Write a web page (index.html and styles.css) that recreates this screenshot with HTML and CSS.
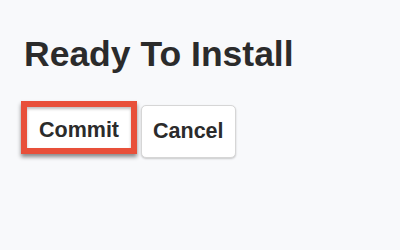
FILE: index.html
```html
<!DOCTYPE html>
<html lang="en">
<head>
  <meta charset="UTF-8" />
  <meta name="viewport" content="width=device-width, initial-scale=1.0"/>
  <title>Ready To Install</title>
  <link rel="stylesheet" href="styles.css">
</head>
<body>

  <div class="panel">
    <h1>Ready To Install</h1>
    <div class="actions">
      <button class="btn btn-commit">Commit</button>
      <button class="btn">Cancel</button>
    </div>
  </div>

</body>
</html>
```

FILE: styles.css
```css
body {
  margin: 0;
  font-family: 'Liberation Sans', Arial, sans-serif;
  background: #f8f9fb;
  color: #2b2b2b;
}

.panel {
  padding: 34px 24px;
}

h1 {
  margin: 0;
  font-size: 35.5px;
  line-height: 40px;
  font-weight: bold;
}

.actions {
  display: flex;
  align-items: flex-start;
  gap: 4px;
  margin-top: 31px;
  margin-left: -3px;
}

.btn {
  font-family: inherit;
  font-size: 21.5px;
  font-weight: bold;
  line-height: 23px;
  color: #2b2b2b;
  background: #fff;
  padding: 14px 11px;
  border: 1px solid #d6d6d6;
  border-radius: 5px;
  box-shadow: 0 1px 2px rgba(0, 0, 0, 0.2);
  cursor: pointer;
}

.btn-commit {
  margin-top: -4px;
  padding: 12px 12px 6px;
  border: 6px solid #e8503a;
  border-radius: 0;
  box-shadow: 0 3px 4px rgba(0, 0, 0, 0.45), inset 0 2px 3px rgba(0, 0, 0, 0.25);
}
```
